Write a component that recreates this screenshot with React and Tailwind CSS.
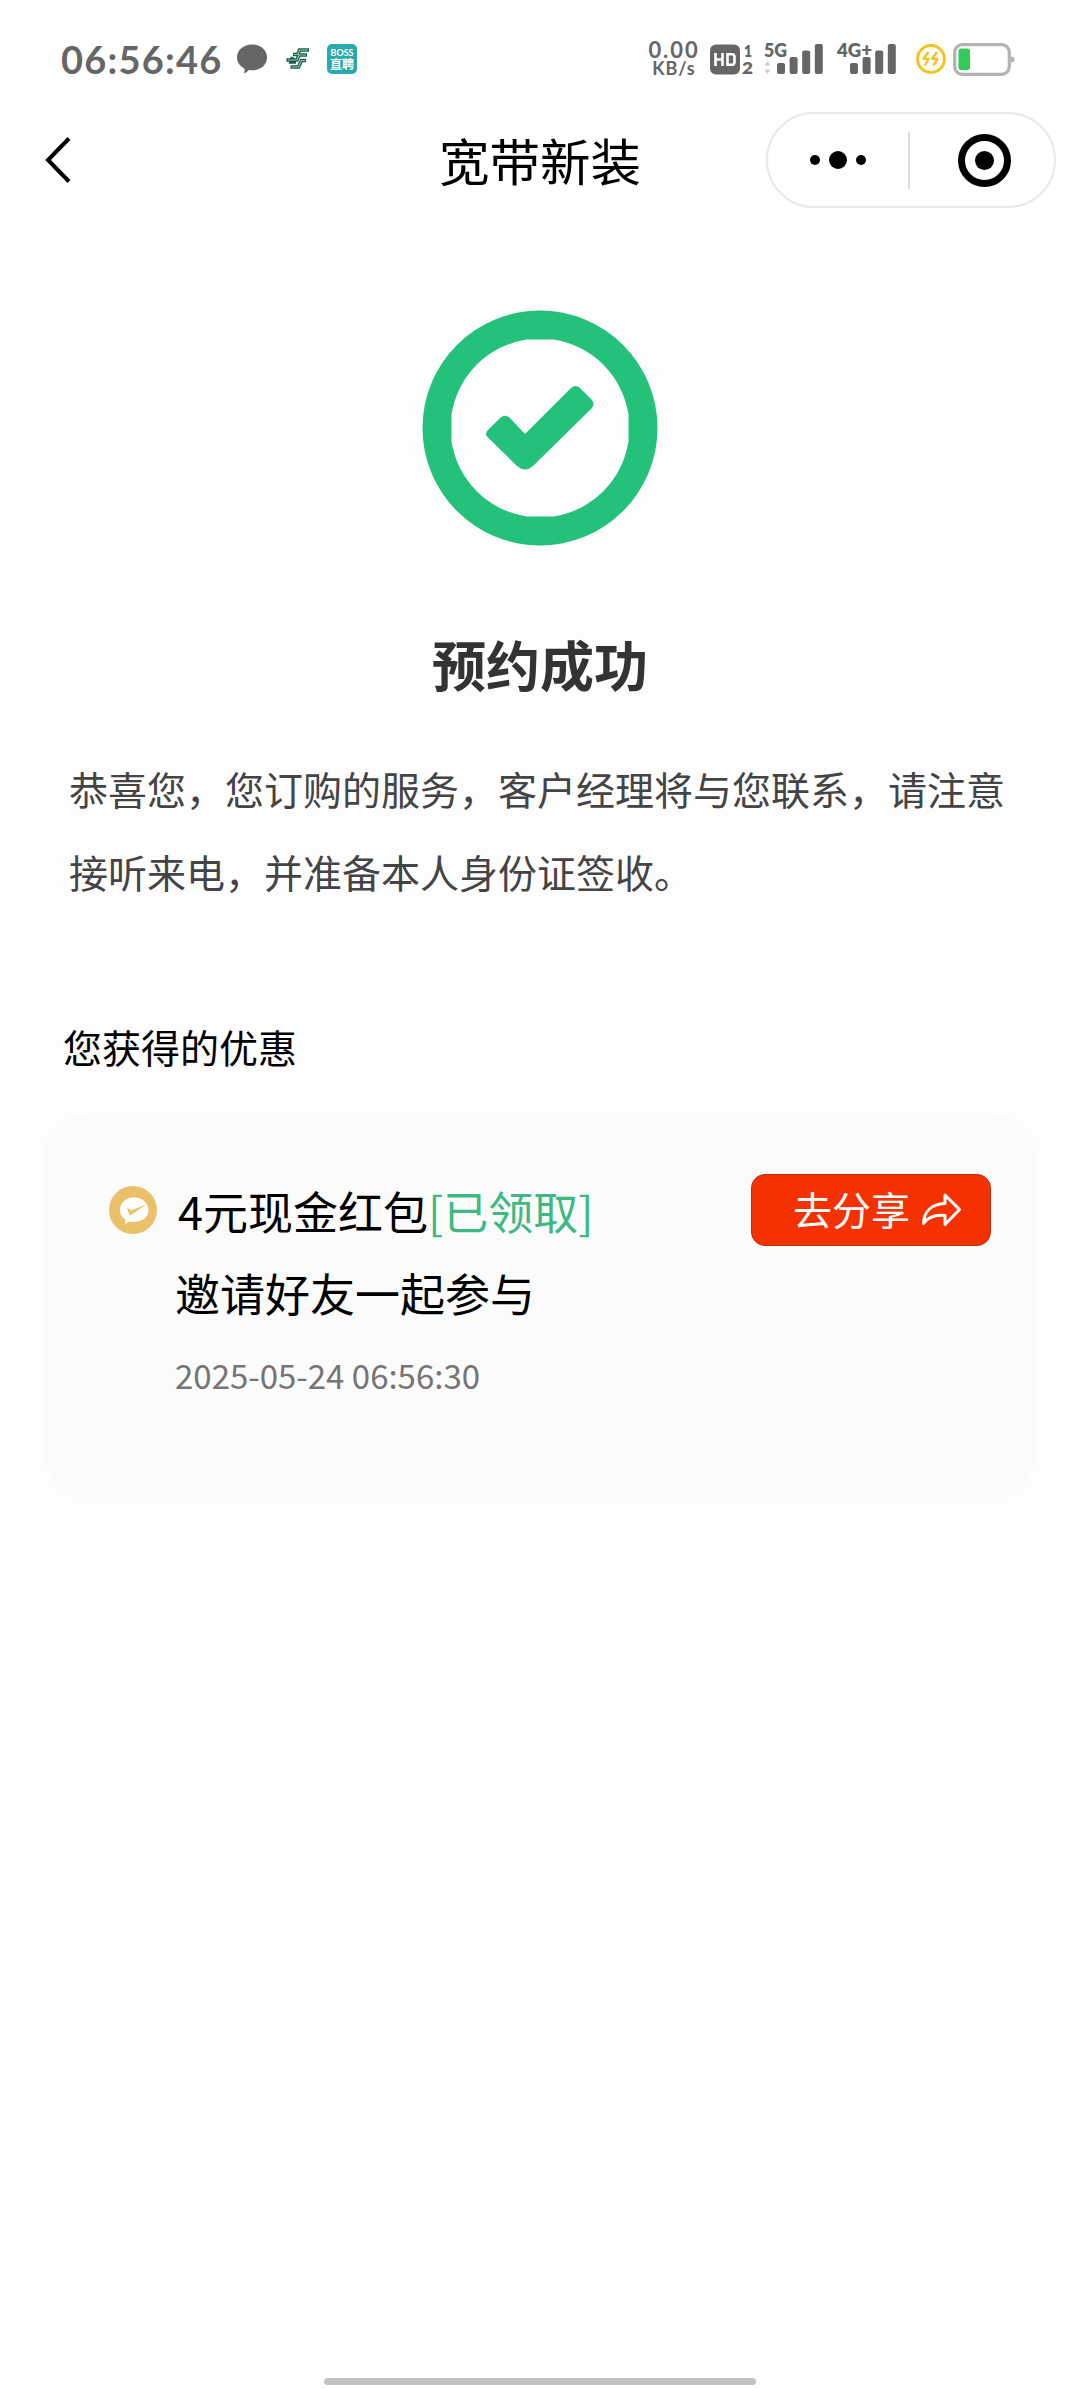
const signals = [
  { id: "sim1", label: "5G", width: 60, labelWidth: 23, offset: 13, arrows: true },
  { id: "sim2", label: "4G+", width: 60, labelWidth: 35, offset: 13, arrows: false },
];

const bars = [
  { x: 0, y: 20, h: 11 },
  { x: 12.6, y: 14, h: 17 },
  { x: 25.2, y: 7.5, h: 23.5 },
  { x: 37.8, y: 1, h: 30 },
];

function Signal({ label, width, labelWidth, offset, arrows }) {
  return (
    <svg className="overflow-visible" width={width} height="32" viewBox={`0 0 ${width} 32`} fill="#666">
      <text
        x="0"
        y="14"
        fontSize="19"
        fontWeight="800"
        textLength={labelWidth}
        lengthAdjust="spacingAndGlyphs"
      >
        {label}
      </text>
      {bars.map((bar) => (
        <rect
          key={bar.x}
          x={bar.x + offset}
          y={bar.y}
          width="8"
          height={bar.h}
          rx="2"
        />
      ))}
      {arrows && (
        <path d="M0.5 22.5L3.5 18L6.5 22.5ZM0.5 26.5L3.5 31L6.5 26.5Z" fill="#ccc" />
      )}
    </svg>
  );
}

function StatusBar() {
  return (
    <div className="flex h-28 items-center justify-between pt-1.5 pr-[65px] pl-[61px] font-[Lato,'Noto_Sans_CJK_SC',sans-serif] text-[#666]">
      <div className="flex items-center">
        <span className="w-[176px] text-[38px] leading-none font-bold tracking-[1.2px] whitespace-nowrap">
          06:56:46
        </span>
        <svg width="30" height="30" viewBox="0 0 30 30" fill="#666">
          <path d="M15 0.5C23.5 0.5 30 6 30 13.5C30 21 23.5 26.3 15 26.3C13.8 26.3 12.8 26.2 11.8 26C10.6 27.5 9 28.6 7 29.2C7.6 27.8 7.8 26 7.3 24.5C3 22.3 0 18.3 0 13.5C0 6 6.5 0.5 15 0.5Z" />
        </svg>
        {/* Postal bank */}
        <svg className="ml-[19px]" width="24" height="24" viewBox="0 0 24 24">
          <g fill="none" stroke="#1d5a47" strokeWidth="3.6">
            <path d="M23 3H13.500L12 7.500H7M21 8H13L11 13H0.500M20 13.500H15.500L12.500 20H4.500M6.500 10L5 15H10" />
          </g>
          <g fill="none" stroke="#86cfa6" strokeWidth="1.200">
            <path d="M22 3H13.500L12 7.500H8M20 8H13L11 13H2M19 13.500H15.500L12.500 20H5.500" />
          </g>
        </svg>
        <svg className="ml-[17px] overflow-visible" width="30" height="30" viewBox="0 0 30 30">
          <rect width="30" height="30" rx="5" fill="#27aaab" />
          <g fill="#fff" fontWeight="700">
            <text x="3.500" y="11.500" fontSize="9" textLength="23">
              BOSS
            </text>
            <text x="3" y="24.500" fontSize="12" textLength="24">
              直聘
            </text>
          </g>
        </svg>
      </div>

      <div className="flex items-center">
        <div className="flex w-[50px] flex-col items-center font-bold whitespace-nowrap">
          <span className="text-[22px] leading-[18px] tracking-[1.900px]">0.00</span>
          <span className="text-[18px] leading-[18px] tracking-[0.900px]">KB/s</span>
        </div>
        <svg className="ml-[11px] overflow-visible" width="43" height="31" viewBox="0 0 43 31" fill="#666">
          <rect y="0.500" width="30" height="30" rx="6" />
          <path
            d="M5.500 9V22M12.500 9V22M5.500 15.500H12.500M17.500 10.300H22Q24.500 10.300 24.500 13V18Q24.500 20.700 22 20.700H17.500Z"
            fill="none"
            stroke="#fff"
            strokeWidth="2.600"
          />
          <text x="34" y="13" fontSize="16" fontWeight="800" textLength="8" lengthAdjust="spacingAndGlyphs">
            1
          </text>
          <text x="32" y="30" fontSize="17" fontWeight="800" textLength="11" lengthAdjust="spacingAndGlyphs">
            2
          </text>
        </svg>
        <div className="ml-[11px] flex gap-[13px]">
          {signals.map(({ id, ...signal }) => (
            <Signal key={id} {...signal} />
          ))}
        </div>
        <svg className="ml-[19px]" width="30" height="30" viewBox="0 0 30 30" fill="none" stroke="#f4c320">
          <circle cx="15" cy="15" r="13.400" strokeWidth="3" />
          <path
            d="M12.500 8L7.500 14.500L12.500 15L9 21.500M21 8L16 14.500L21.500 15L17.500 21.500"
            strokeWidth="2.400"
            strokeLinejoin="round"
          />
        </svg>
        <svg className="ml-[7px]" width="62" height="33" viewBox="0 0 62 33">
          <rect x="1.700" y="1.700" width="54.600" height="29.600" rx="7.500" fill="none" stroke="#b3b3b3" strokeWidth="3.200" />
          <path d="M58 13.500Q61.500 13.500 61.500 16.500Q61.500 19.500 58 19.500Z" fill="#b3b3b3" />
          <rect x="5.500" y="5.500" width="11.500" height="21.500" rx="2.500" fill="#32cb5b" />
        </svg>
      </div>
    </div>
  );
}

function NavBar() {
  return (
    <div className="grid h-28 grid-cols-3 items-start pr-[24px] pl-[44px]">
      <svg className="mt-[24px]" width="28" height="48" viewBox="0 0 28 48">
        <path d="M25 2.500L4 24L25 45.500" fill="none" stroke="#000" strokeWidth="4" />
      </svg>
      <h1 className="-ml-5 h-24 text-center text-[50.500px] leading-[94px] whitespace-nowrap text-black">
        宽带新装
      </h1>
      {/* Mini program capsule */}
      <div className="flex h-24 w-[290px] items-center justify-self-end rounded-full border-2 border-[#e8e8e8]">
        <div className="flex flex-1 items-center justify-center gap-[9px]">
          <span className="size-[10px] rounded-full bg-black" />
          <span className="size-[18px] rounded-full bg-black" />
          <span className="size-[10px] rounded-full bg-black" />
        </div>
        <span className="h-[57px] w-[2px] bg-[#dcdcdc]" />
        <div className="flex flex-1 items-center justify-center pl-1">
          <span className="flex size-[53px] items-center justify-center rounded-full border-[7px] border-black">
            <span className="size-[19px] rounded-full bg-black" />
          </span>
        </div>
      </div>
    </div>
  );
}

function SuccessIcon() {
  return (
    <svg className="mx-auto block" width="236" height="236" viewBox="0 0 236 236">
      <circle cx="118" cy="118" r="117.500" fill="#24c17a" />
      <path
        d="M104.700 29.500H131.300A89.500 89.500 0 0 1 206.500 104.700V131.300A89.500 89.500 0 0 1 131.300 206.500H104.700A89.500 89.500 0 0 1 29.500 131.300V104.700A89.500 89.500 0 0 1 104.700 29.500Z"
        fill="#fdfdfd"
      />
      <path
        d="M65.500 120.500L78.500 107.500Q83 104 87.500 107.500L103 124L149 78Q153.500 74 158 78L169.500 89.500Q173.500 94 169.500 98.500L111 156Q103 163 95 156L65.500 127Q62.500 124 65.500 120.500Z"
        fill="#24c17a"
      />
    </svg>
  );
}

function RewardCard() {
  return (
    <div className="mx-[43px] mt-[41px] flex h-[384px] items-start rounded-[50px] bg-[#fbfbfb] pt-[60px] pr-[46px] pl-[66px]">
      <svg className="mt-[12px] shrink-0" width="48" height="48" viewBox="0 0 48 48">
        <circle cx="24" cy="24" r="24" fill="#ebc06a" />
        <path
          d="M25 11.500C33.500 11.500 39.500 17 39.500 24C39.500 31 33.500 36 25 36C23.500 36 22 35.800 20.500 35.500L16 38L16.500 33.500C13 31.500 11 28 11 24C11 17 17 11.500 25 11.500Z"
          fill="#fff"
        />
        <path d="M18 21.500L22.500 24.500L38 18L22 29Q20.500 29.500 20 28Z" fill="#ebc06a" />
      </svg>
      <div className="ml-[18px] flex-1 whitespace-nowrap">
        <p className="pl-[3px] text-[45px] leading-[73px] text-black">
          4元现金红包<span className="text-[#3eb984]">[已领取]</span>
        </p>
        <p className="text-[45px] leading-[91px] text-black">邀请好友一起参与</p>
        <p className="text-[33px] leading-[75px] text-[#757575]">
          2025-05-24 06:56:30
        </p>
      </div>
      <button className="flex h-[72px] w-[240px] items-center rounded-[14px] border border-[#bd2c0c] bg-[#f63100] pl-[41px] text-[39px] leading-none text-white">
        <span className="pb-[3px]">去分享</span>
        <svg className="ml-[11px]" width="41" height="36" viewBox="0 0 41 36" fill="none">
          <path
            d="M24 3L38.500 17.500L24 32.500V23.500C14 22.500 7 25 2.500 31.500C3 19 11 12 24 11.500Z"
            stroke="#fff"
            strokeWidth="3"
            strokeLinejoin="round"
          />
        </svg>
      </button>
    </div>
  );
}

export default function App() {
  return (
    <div className="flex h-[2388px] w-[1080px] flex-col overflow-hidden bg-white font-['Noto_Sans_CJK_SC',sans-serif]">
      <StatusBar />
      <NavBar />

      <main className="h-[1362px] bg-[#fdfdfd] pt-[86px]">
        <SuccessIcon />
        <h2 className="mt-[78px] text-center text-[54px] leading-[80px] font-bold text-[#333]">
          预约成功
        </h2>
        <p className="mx-[69px] mt-[43px] text-[39px] leading-[83px] text-[#444]">
          恭喜您，您订购的服务，客户经理将与您联系，请注意
          <br />
          接听来电，并准备本人身份证签收。
        </p>
        <h3 className="mt-[106px] ml-[63px] text-[39px] leading-[54px] text-black">
          您获得的优惠
        </h3>
        <RewardCard />
      </main>

      {/* Home indicator */}
      <div className="mx-auto mt-auto mb-[3px] h-[7px] w-[432px] rounded-full bg-[#c2c2c2]" />
    </div>
  );
}
